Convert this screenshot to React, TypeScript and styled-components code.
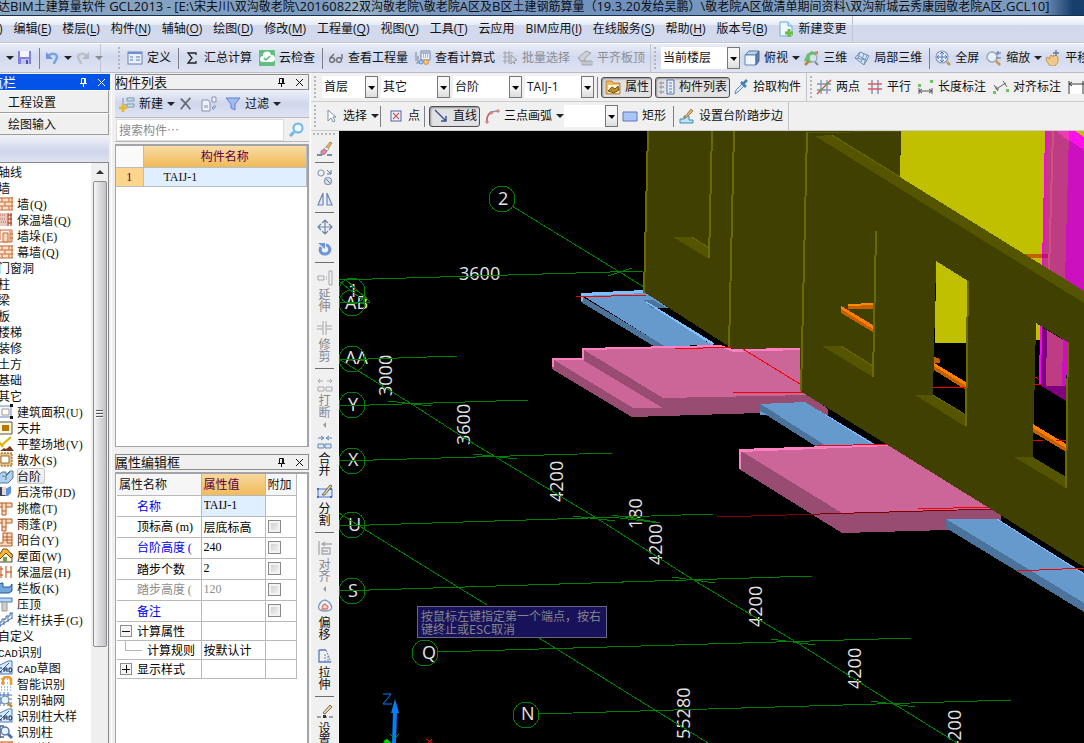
import React from 'react';
import styled, { createGlobalStyle, css } from 'styled-components';

const UI_FONT = '"Open Sans", "Noto Sans CJK SC", sans-serif';
const PANEL_FONT = '"Noto Sans CJK SC", sans-serif';

const Global = createGlobalStyle`
  html, body, #root { height: 100%; }
  body { margin: 0; background: #f0f0f0; font: 12px/16px ${UI_FONT}; color: #111; overflow: hidden; }
  * { box-sizing: border-box; }
  button, input, select { font: inherit; color: inherit; margin: 0; padding: 0; border: 0; background: none; }
`;

/* ---------- frame ---------- */
const Page = styled.div`
  display: flex; flex-direction: column; height: 100vh; overflow: hidden; white-space: nowrap;
`;
const TitleBar = styled.header`
  height: 16px; flex: none; display: flex; align-items: flex-start; overflow: hidden;
  background: linear-gradient(to right, transparent 96%, #173f6c 99%),
    linear-gradient(to right, #8ca9c4, #7b9cc0 30%, #9db6c9 33%, #7c9ac0 38%, #6e90bd 60%, #88a5c2 75%, #7896bd);
  border-bottom: 1px solid #17304c;
`;
const TitleText = styled.h1`
  margin: 0 0 0 -2px; font-size: 12px; line-height: 12px; font-weight: 400; color: #0c0c12;
  span { font-size: 13px; }
`;
const MenuBar = styled.nav`
  height: 27px; flex: none; display: flex; align-items: center; overflow: hidden;
  background: linear-gradient(#fbfcfe, #e6ebf5 34%, #d2d9ed 36%, #d4daee);
  border-bottom: 1px solid #c4c8d4;
`;
const MenuGroup = styled.div`
  display: flex; align-items: center; gap: 11px; height: 100%; padding-right: 6px;
  border-right: 1px solid #bfc4d2; margin-left: -1px;
`;
const MenuItem = styled.button`
  display: flex; align-items: center; gap: 4px; height: 20px; flex: none;
  u { text-underline-offset: 2px; }
`;
const ToolRow = styled.div<{ $tone?: 'blue' | 'gray' }>`
  height: ${p => (p.$tone === 'blue' ? 30 : 29)}px; flex: none; display: flex; align-items: center; overflow: hidden;
  ${p => p.$tone === 'blue'
    ? css`background: linear-gradient(#e9edf7, #d3daee 45%, #dfe4f3); border-top: 1px solid #fff; border-bottom: 1px solid #b9bdc9;`
    : css`background: #f0f0f0; border-bottom: 1px solid #cdcdcd;`}
`;
const ToolGroup = styled.div<{ $lead?: number; $gap?: number; $tail?: number }>`
  display: flex; align-items: center; gap: ${p => p.$gap ?? 7}px; height: 100%; flex: none;
  padding: 0 ${p => p.$tail ?? 5}px 0 ${p => p.$lead ?? 7}px; border-right: 1px solid #c2c4cc;
`;
const Tight = styled.div<{ $gap?: number }>`display: flex; align-items: center; gap: ${p => p.$gap ?? 3}px;`;
const Grip = styled.span<{ $before?: number }>`
  width: 2px; height: 22px; flex: none; margin-left: ${p => p.$before ?? 3}px;
  background: repeating-linear-gradient(#b4b6be 0 2px, transparent 2px 4px);
`;
const Divider = styled.span`
  width: 1px; height: 21px; background: #7d7f86; flex: none;
  ${ToolGroup} > & { margin-right: -2px; }
`;
const Caret = styled.span<{ $off?: boolean }>`
  width: 0; height: 0; flex: none; border: 4px solid transparent; border-bottom: 0;
  border-top-color: ${p => (p.$off ? '#8a8a90' : '#222')};
`;
const Tool = styled.button<{ $pressed?: boolean; $off?: boolean }>`
  display: flex; align-items: center; gap: 4px; height: 21px; flex: none;
  color: ${p => (p.$off ? '#8b8d93' : '#111')};
  > ${Caret} { margin-right: -4px; }
  ${p => p.$pressed && css`
    padding: 0 2px 0 3px; border: 1px solid #4f4f4f; border-radius: 3px;
    background: #e2e2e4; box-shadow: inset 1px 1px 2px #8d8d8d;`}
`;
const ComboBox = styled.span<{ $w: number }>`
  position: relative; display: flex; width: ${p => p.$w}px; height: 22px; background: #fff; flex: none;
  select { flex: 1; min-width: 0; appearance: none; padding: 0 13px 0 2px; outline: none; }
  &::after {
    content: ''; position: absolute; right: 0; top: 0; width: 13px; height: 22px; pointer-events: none;
    border: 1px solid #777; box-sizing: border-box; background: linear-gradient(#f6f6f6 50%, #dcdcdc);
  }
  &::before {
    content: ''; position: absolute; z-index: 1; right: 3px; top: 10px; pointer-events: none;
    border: 4px solid transparent; border-bottom: 0; border-top-color: #000;
    border-left-width: 4px; border-right-width: 3px;
  }
`;
const Body = styled.div`flex: 1; min-height: 0; display: flex;`;
const Svg = styled.svg`display: block; flex: none;`;

/* ---------- navigation dock ---------- */
const Dock = styled.aside`
  width: 112px; flex: none; display: flex; flex-direction: column; font-family: ${PANEL_FONT};
  padding-right: 1px; background: #f0f0f0; border-right: 1px solid #fff;
`;
const DockHead = styled.div`
  height: 16px; margin-top: 1px; flex: none; display: flex; align-items: center; gap: 9px; background: #0453e8; color: #fff;
  padding-right: 4px; font-size: 13px; line-height: 14px; overflow: hidden;
  h2 { flex: 1; margin: 0 0 0 -10px; font: inherit; }
`;
const DockTab = styled.button`
  height: 22px; flex: none; text-align: left; padding-left: 8px; margin-right: 1px;
  border: 1px solid #9c9c9c; border-left: 0; border-top-color: #fff; background: #f0f0f0;
  &:first-of-type { height: 23px; }
`;
const DockBand = styled.div`
  height: 26px; flex: none; margin: 1px 1px 0 0; background: linear-gradient(#eef1f8, #cfd6ea 60%, #dfe3f2);
`;
const TreeBox = styled.div`
  flex: 1; min-height: 0; display: flex; background: #fff; border: 1px solid #888; border-left: 0; border-bottom: 0;
  margin-right: 1px; overflow: hidden;
`;
const Tree = styled.ul`
  flex: 1; min-width: 0; margin: 0; padding: 1px 0 0; list-style: none; overflow: hidden;
`;
const TreeGroup = styled.li`height: 16px; margin-left: -2px; line-height: 16px;`;
const TreeLeaf = styled.li<{ $on?: boolean }>`
  height: 16px; line-height: 16px; display: flex; align-items: center; gap: 3px; margin-left: -2px;
  > span {
    padding: 0 4px 0 0; line-height: 15px; height: 16px;
    ${p => p.$on && css`box-shadow: inset 0 0 0 1px #c8c8c8; border-radius: 3px; background: linear-gradient(#fafafa, #e6e6e6);`}
  }
`;
const Key = styled.span`font: 12px/14px "Liberation Serif", serif; margin-left: 1px;`;
const Narrow = styled.span`font: 11px/14px "Liberation Mono", monospace;`;
const ScrollBar = styled.div`
  width: 17px; flex: none; background: #efefef; display: flex; flex-direction: column; align-items: center;
`;
const ScrollUp = styled.button`
  width: 16px; height: 18px; display: flex; align-items: center; justify-content: center;
  &::after { content: ''; border: 4px solid transparent; border-top: 0; border-bottom-color: #333; }
`;
const Thumb = styled.div`
  width: 14px; height: 466px; max-height: 84%; border: 1px solid #8e8e8e; border-radius: 2px;
  background: linear-gradient(to right, #f6f6f6, #dcdce0 45%, #c2c2c8);
  display: flex; align-items: center; justify-content: center;
  &::after { content: ''; width: 7px; height: 8px; background: repeating-linear-gradient(#555 0 1px, #fafafa 1px 2px, transparent 2px 3px); }
`;

/* ---------- component and property panels ---------- */
const Panels = styled.div`
  width: 199px; flex: none; display: flex; flex-direction: column; padding: 1px 1px 0 3px; font-family: ${PANEL_FONT};
  border-right: 1px solid #fff;
`;
const PanelHead = styled.div`
  height: 16px; flex: none; display: flex; align-items: center; gap: 9px; border: 1px solid #8b8b8b;
  padding-right: 4px; font-size: 13px; line-height: 14px; overflow: hidden;
  h2 { flex: 1; margin: 0 0 0 -1px; font: inherit; }
`;
const HeadButton = styled.button`width: 9px; height: 9px; display: block; flex: none;`;
const PanelTools = styled.div`
  height: 28px; flex: none; display: flex; align-items: center; gap: 8px; padding-left: 4px; font-family: ${UI_FONT};
  background: linear-gradient(#edf0f9, #d0d7ec 50%, #dfe3f3); border-bottom: 1px solid #b8bcc8;
`;
const SearchRow = styled.form`
  height: 24px; flex: none; display: flex; align-items: center; border-bottom: 1px solid #b9b9b9; padding-left: 1px;
  input { flex: 1; min-width: 0; height: 22px; background: #fff; padding: 0 2px; border: 1px solid #dcdcdc; outline: none; }
  input::placeholder { color: #8a8a8a; opacity: 1; }
  button { width: 25px; display: flex; justify-content: center; }
`;
const GridFrame = styled.div<{ $grow?: boolean }>`
  background: #fff; border: 2px solid #a4a4a8; border-left-width: 1px; border-bottom-width: ${p => (p.$grow ? 0 : 1)}px; overflow: hidden;
  ${p => (p.$grow ? css`flex: 1; min-height: 0; margin-top: 2px;` : css`height: 303px; flex: none; margin: 2px 0 7px;`)}
`;
const ListTable = styled.table`
  width: 100%; border-collapse: collapse; table-layout: fixed;
  th, td { padding: 0; border: 1px solid #b9bcc2; font-weight: 400; border-left: 0; border-top: 0; }
  thead th { height: 21px; color: #5b0048; background: linear-gradient(#f9dba5, #efbb57); }
  thead td { background: #fafafa; }
  tbody th { height: 19px; background: #fdd48c; color: #5b0048; }
  tbody td { background: #e0efff; padding-left: 20px; }
`;
const PropTable = styled.table`
  width: 179px; border-collapse: collapse; table-layout: fixed; margin: 0 0 0 1px;
  th, td { padding: 0; border: 1px solid #b9b9b9; border-left: 0; font-weight: 400; text-align: left; overflow: hidden; line-height: 16px; }
  thead th { height: 21px; padding-left: 2px; background: #f6f6f6; border-top: 0; }
  thead th:nth-child(2) { background: linear-gradient(#f8d79c, #efbb5c); color: #5b0048; }
  td { padding-left: 2px; }
`;
const PropRow = styled.tr<{ $h: number; $tone?: string }>`
  height: ${p => p.$h}px;
  th { color: ${p => p.$tone ?? '#000'}; }
  td { color: ${p => (p.$tone === '#8d8d8d' ? '#8d8d8d' : '#000')}; }
`;
const PropName = styled.label<{ $indent: number }>`
  display: flex; align-items: center; gap: 5px; height: 18px; padding-left: ${p => p.$indent}px; overflow: hidden;
`;
const ValueCell = styled.td<{ $active?: boolean }>`
  background: ${p => (p.$active ? '#e0efff' : '#fff')};
  input { width: 100%; height: 18px; display: block; outline: none; }
`;
const Latin = styled.span`font: 12px/16px "Liberation Serif", serif;`;
const LatinInput = styled.input`&& { font: 12px/16px "Liberation Serif", serif; }`;
const Check = styled.input`
  appearance: none; width: 13px; height: 13px; display: block; border: 1px solid #8a8a8a; background: linear-gradient(135deg, #c9c9cd, #f8f8f8);
  box-shadow: inset 0 0 0 2px #f3f3f3;
`;
const Fold = styled.button`
  && { width: 12px; height: 12px; border: 1px solid #8d8d8d; background: #f4f4f4; flex: none; margin-left: 3px; }
`;
const Branch = styled.i`width: 17px; height: 14px; border: solid #b4b4b4; border-width: 0 0 1px 1px; margin: -12px 0 0 8px; flex: none;`;

/* ---------- work area ---------- */
const Work = styled.main`flex: 1; min-width: 0; display: flex; flex-direction: column;`;
const WorkBody = styled.div`flex: 1; min-height: 0; display: flex;`;
const SideTools = styled.div`
  width: 28px; flex: none; display: flex; flex-direction: column; align-items: center; overflow: hidden;
  background: #f0f0f0; border-right: 1px solid #f7f7f7;
`;
const SideGrip = styled.span`
  width: 24px; height: 2px; flex: none; margin: 2px 0 0;
  background: repeating-linear-gradient(to right, #b4b6be 0 2px, transparent 2px 4px);
`;
const SideRule = styled.span`width: 19px; height: 1px; background: #6d6d6d; flex: none; margin-top: 5px;`;
const SideTool = styled.button<{ $off?: boolean; $label?: boolean }>`
  width: 20px; flex: none; display: flex; flex-direction: column; align-items: center; gap: 3px;
  margin-top: ${p => (p.$label ? 7 : 6)}px; color: ${p => (p.$off ? '#85878d' : '#111')};
  span { width: 13px; font-size: 12px; line-height: 12px; white-space: normal; word-break: break-all; text-align: center; }
  i { border: 3px solid transparent; border-left: 0; border-right-color: #999; margin-bottom: -1px; }
`;
const Viewport = styled.section`
  position: relative; flex: 1; min-width: 0; background: #000; overflow: hidden;
`;
const Scene = styled.svg`display: block; width: 100%; height: 100%;`;
const Hint = styled.div`
  position: absolute; left: 78px; top: 475px; width: 190px; height: 32px; padding: 2px 3px;
  background: #17125a; border: 1px solid #68687c; color: #85858a; line-height: 13px; white-space: normal;
  font-family: ${PANEL_FONT};
`;

/* ---------- icons ---------- */
const art: Record<string, React.ReactNode> = {
  save: <><path d="M1 1h13v13H1z" fill="#8280d8" /><path d="M3 1h9v6H3z" fill="#f4f4ff" /><path d="M4 9h8v5H4z" fill="#bfc2f2" /><path d="M9 10h2v4H9z" fill="#4d55a2" /></>,
  undo: <><path d="M4 6c4-4 9-2 9 1 0 3-3 4-3 7" fill="none" stroke="#78a3df" strokeWidth="2.5" /><path d="M2 2v7h7z" fill="#6f98dc" /></>,
  redo: <><path d="M12 6C8 2 3 4 3 7c0 3 3 4 3 7" fill="none" stroke="#bcc1ca" strokeWidth="2.5" /><path d="M14 2v7H7z" fill="#b4b9c4" /></>,
  define: <><rect x="1" y="2" width="14" height="12" fill="#e9f0fc" stroke="#6983b8" /><path d="M1 2h14v2H1z" fill="#6e8fd0" /><path d="M3 7h3M3 10h3M9 7h4M9 10h4" stroke="#5778bb" strokeWidth="1.2" /></>,
  sigma: <path d="M12 5V3H4l4 5-4 5h8v-2" fill="none" stroke="#222" strokeWidth="1.3" />,
  cloud: <><rect width="16" height="16" rx="1" fill="#62bf80" /><path d="M4 12a3 3 0 010-6 4 4 0 018-1 3 3 0 011 7z" fill="#fff" /><path d="M5 8l2 2 4-4" fill="none" stroke="#52ba73" strokeWidth="1.5" /></>,
  glasses: <><circle cx="4" cy="10" r="2.4" fill="none" stroke="#666" strokeWidth="1.2" /><circle cx="11" cy="10" r="2.4" fill="none" stroke="#666" strokeWidth="1.2" /><path d="M2 8l4-4M14 9V4M6 10h2" stroke="#666" strokeWidth="1.2" /></>,
  formula: <><path d="M6 1h9v9H6z" fill="#f5f7ff" stroke="#6f7ea3" /><path d="M7 3h7M8 5h1M10 5h1M12 5h1M8 7h1M10 7h1M12 7h1" stroke="#596fa6" /><path d="M1 2v9M3 6v7M1 13h4" stroke="#8d93a8" strokeWidth="1.2" /><circle cx="11" cy="12" r="2.4" fill="#f7c77b" stroke="#d6883d" /><circle cx="6" cy="12" r="2" fill="#aad0f7" stroke="#6791c4" /></>,
  batch: <><path d="M1 3h10M1 7h7M1 11h7M3 1v13M7 1v13" stroke="#a6a8b0" strokeWidth="1.2" /><path d="M9 5l6 5-3 1 1 3-2-2-2 2z" fill="#d8dae2" stroke="#999ba2" /></>,
  slab: <><path d="M1 8l8-7 5 2-6 5v3H3V9z" fill="#cfd1d6" stroke="#a0a2a8" /><path d="M5 11h10v4H5zM7 11v4M9 11v4M11 11v4M13 11v4" fill="#dfe0e4" stroke="#9a9ca2" strokeWidth=".8" /></>,
  cube: <><path d="M1 5l4-4h10l-3 4z" fill="#b8d2ec" stroke="#5b7ca7" /><path d="M1 5h11v10H1z" fill="#eef5fb" stroke="#6784a8" /><path d="M12 5l3-4v10l-3 4z" fill="#5b7fb1" stroke="#4b6997" /></>,
  tri3d: <><path d="M1 11L4 4l5-3 4 2 1 6-6 4z" fill="#5ec369" /><circle cx="10" cy="8" r="4" fill="#cfe6dc" stroke="#8d9cb4" /><path d="M11 2l4-1v4z" fill="#e67744" /><path d="M6 11l-4 4" stroke="#c0813f" strokeWidth="2.5" /><path d="M12 12l3 3" stroke="#7d89a4" strokeWidth="2" /></>,
  local3d: <><path d="M1 8l5-6 9 4-5 9z" fill="#d6e6f6" stroke="#6e8db5" /><path d="M3 5l9 5M6 2l-2 7M10 4L7 12M13 5l-3 9M1 8l11 2" stroke="#6e8db5" strokeWidth=".9" fill="none" /></>,
  full: <><circle cx="7" cy="7" r="6" fill="#e6f0ff" stroke="#8d99b5" strokeWidth="1.2" /><path d="M7 2v10M2 7h10M5 4l2-2 2 2M5 10l2 2 2-2M4 5L2 7l2 2M10 5l2 2-2 2" stroke="#4b6cb0" strokeWidth=".9" fill="none" /><path d="M12 12l3 3" stroke="#c39b59" strokeWidth="2.5" /></>,
  zoom: <><circle cx="6" cy="7" r="5" fill="#e8f1f8" stroke="#9ca6b4" strokeWidth="1.4" /><path d="M10 11l4 4" stroke="#cb964e" strokeWidth="2.5" /><path d="M12 1v4M10 3h5M10 8h5" stroke="#5672a0" /></>,
  hand: <><path d="M2 7l3 2V6l1-1 2 2V5l2 1 1-1 2 2v5l-3 4H5L1 10z" fill="#edc98d" stroke="#c7994e" /><path d="M11 0v6M8 3h6" stroke="#667495" strokeWidth="1.3" /></>,
  newDoc: <><path d="M2 1h8l4 4v10H2z" fill="#eef7fd" stroke="#6badd3" /><path d="M10 1v4h4" fill="#cfe7f5" stroke="#6badd3" /><path d="M11 8v8M7 12h8" stroke="#6cbc3e" strokeWidth="3" /></>,
  folder: <><path d="M1 4V2h6l1 2h7v11H1z" fill="#f8ba54" stroke="#a77632" strokeWidth=".8" /><path d="M3 6h11v8H3z" fill="#fff2ce" /><path d="M3 12l4-4 3 2 3-3 1 4-5 3z" fill="#c38a28" stroke="#51401d" strokeWidth=".8" /></>,
  list: <><path d="M8 1h7v14H8z" fill="#e8f0ff" stroke="#5870a5" /><path d="M10 4h3M10 7h3M10 10h3M10 13h3" stroke="#5577bd" /><path d="M1 3h2v2H1zM1 7h2v2H1zM1 12h2v2H1z" fill="none" stroke="#8c95a8" /><path d="M4 4h2M4 8h2M4 13h2" stroke="#667" strokeDasharray="1 1" /></>,
  picker: <><path d="M2 15l1-4 6-6 2 2-6 6z" fill="#d4e9fb" stroke="#6e8cab" /><path d="M8 3l5 5M10 5l4-4" stroke="#4a80b4" strokeWidth="2.6" /></>,
  twoPoint: <><path d="M5 1v14M11 1v14M1 5h14M1 11h14" stroke="#8794b0" strokeWidth="1.3" /><path d="M1 15L15 1" stroke="#cf4e53" strokeWidth="1.3" /><circle cx="11" cy="5" r="1.4" fill="#5dad52" /><circle cx="5" cy="11" r="1.4" fill="#5dad52" /></>,
  parallel: <><path d="M5 1v14M11 1v14" stroke="#7484b3" strokeWidth="1.3" /><path d="M1 5h14M1 10h14" stroke="#d45c62" strokeWidth="1.3" /></>,
  length: <><path d="M1 9v6M14 9v6M1 12h13M4 10l-3 2 3 2M11 10l3 2-3 2" stroke="#555" fill="none" /><path d="M0 5h3v3H0zM12 1h3v3h-3z" fill="#67c75b" /></>,
  align: <><path d="M1 6l4 6M10 2l4 6M3 10l10-6M3 7v3h3" stroke="#666" fill="none" /><path d="M0 12h3v3H0zM13 10h3v3h-3z" fill="#67c75b" /></>,
  span: <><path d="M0 4h16v11H0z" fill="#fff" /><path d="M1 2v13M15 2v13M1 5h15M4 3L1 5l3 2" stroke="#333" fill="none" /></>,
  cursor: <path d="M5 2v11l3-3 2 4 2-1-2-4h3z" fill="#fff" stroke="#7f8faa" />,
  point: <><rect x="3" y="3" width="10" height="10" fill="#eef0f8" stroke="#5166a2" /><path d="M5 5l6 6M11 5l-6 6" stroke="#cb555b" strokeWidth="1.1" /></>,
  line: <path d="M2 2l11 11M13 8v5H8" stroke="#33518a" fill="none" strokeWidth="1.4" />,
  arc: <><path d="M3 14C2 8 6 3 14 3" stroke="#7aa0d4" fill="none" strokeWidth="1.4" /><path d="M3 14C2 8 6 3 9 4" stroke="#d36159" fill="none" strokeWidth="1.4" /><path d="M2 13h2v2H2zM6 4h2v2H6zM13 2h2v2h-2z" fill="#f5cbc5" stroke="#ce7468" /></>,
  rect: <path d="M1 4h14v9H1z" fill="#abc6f5" stroke="#5877c0" />,
  stair: <><path d="M1 11h4V8h5v4h4v3H1z" fill="#bce1f5" stroke="#388cb4" /><path d="M5 10l7-9 2 2-7 7z" fill="#e9b06a" stroke="#84612d" strokeWidth=".7" /></>,
  add: <><path d="M8 2h7v3H8zM8 8h7v3H8z" fill="#c5e1f3" stroke="#8195ad" /><path d="M4 2v7h4" fill="none" stroke="#8195ad" /><path d="M4 8v8M0 12h8" stroke="#e5b72a" strokeWidth="2.6" /></>,
  remove: <path d="M2 2c4 3 7 7 11 12M13 1C9 5 5 10 2 14" stroke="#686c74" strokeWidth="2" fill="none" />,
  copy: <><path d="M1 4h6l2 2v9H1z" fill="#eef1f8" stroke="#8794ae" /><path d="M3 9h4v3H3z" fill="#b8c1d4" /><path d="M11 1h4v5h-4z" fill="#eef1f8" stroke="#8794ae" /><path d="M14 9v3h-3M13 10l-2 2 2 2" fill="none" stroke="#7d97d1" /></>,
  filter: <path d="M1 2h14l-5 6v6l-4-2V8z" fill="#a2baf0" stroke="#5f81cf" />,
  search: <><circle cx="9" cy="6" r="4.5" fill="#eff8ff" stroke="#6db5ef" strokeWidth="2" /><path d="M5 10l-4 4" stroke="#6db5ef" strokeWidth="3" /></>,
  brush: <><path d="M9 6l4-5 2 1-4 6z" fill="#f3b450" stroke="#78613e" strokeWidth=".6" /><path d="M7 8l2-2 3 2-2 2z" fill="#f4f4f8" stroke="#8a8a98" strokeWidth=".6" /><path d="M4 10l3-2 3 2-2 3-4 1z" fill="#e28aa4" stroke="#735267" strokeWidth=".6" /><path d="M0 14h5M10 14h5" stroke="#728caa" strokeWidth="1.8" /></>,
  clone: <><circle cx="4" cy="4" r="3" fill="none" stroke="#8c9aae" strokeWidth="1.2" /><circle cx="11" cy="12" r="3.5" fill="#dbe3ea" stroke="#8c9aae" strokeWidth="1.2" /><path d="M10 1l4 4M14 1v4h-4M9 10l4 4" stroke="#5678af" fill="none" /></>,
  mirror: <path d="M6 2v12H1zM10 2v12h5z" fill="#e0e9f8" stroke="#6e88b7" strokeWidth="1.2" />,
  move: <path d="M8 1v14M1 8h14M5 4l3-3 3 3M5 12l3 3 3-3M4 5L1 8l3 3M12 5l3 3-3 3" stroke="#7087a8" strokeWidth="1.2" fill="none" />,
  rotate: <><path d="M4 6c-2 4 0 7 4 7s6-4 4-7c-1-2-2-2-3-2" fill="none" stroke="#6c94da" strokeWidth="3" /><path d="M1 2h7v6z" fill="#6c94da" /></>,
  extend: <path d="M1 6h6v4H1zM9 7h1M9 9h1M12 1h3v14h-3z" fill="none" stroke="#a7a9ae" />,
  trim: <path d="M6 1v14M9 1v14M0 6h6M0 9h6M9 6h6M9 9h6" stroke="#a7a9ae" fill="none" />,
  cut: <path d="M1 5h5M10 5h5M3 3L1 5l2 2M13 3l2 2-2 2M1 11h6v4H1zM9 11h6v4H9z" stroke="#a7a9ae" fill="none" />,
  merge: <path d="M1 4h5M10 4h5M4 2l3 2-3 2M12 2L9 4l3 2M1 10h6v4H1zM8 10h6v4H8z" stroke="#6586b8" fill="#dce6f5" />,
  split: <><path d="M1 5h14v8H1z" fill="#dce9ff" stroke="#4e72c9" /><path d="M0 4h2v2H0zM13 4h2v2h-2zM0 12h2v2H0zM13 12h2v2h-2z" fill="#4568ca" /><path d="M5 11l8-10 2 1-7 9z" fill="#eacb95" stroke="#554c3d" strokeWidth=".8" /></>,
  justify: <path d="M2 1v14M5 8h8v6H5zM5 4h10M8 2L5 4l3 2M5 11h6" stroke="#a7a9ae" fill="none" strokeWidth="1.3" />,
  offset: <><path d="M5 3l3-1 4 2c4 5 4 9-4 9-8 0-8-5-3-10z" fill="#edf3fb" stroke="#7899bb" strokeWidth="1.3" /><path d="M6 7l2-1 3 3-1 2H5z" fill="#ffd7ce" stroke="#dd776c" strokeWidth="1.3" /></>,
  stretch: <><path d="M2 2h7M2 2v12h12" fill="none" stroke="#557cc0" strokeWidth="1.3" /><path d="M9 2l5 12M8 6v7M11 8v6" stroke="#6681ad" strokeDasharray="2 1" /></>,
  setup: <><path d="M0 13h16" stroke="#555" strokeDasharray="4 2" /><path d="M6 9l7-8 2 2-7 7z" fill="#ecd2a6" stroke="#806b55" /><path d="M6 11h3v3H6z" fill="#333" /></>,
  brick: <><path d="M0 1h15v13H0z" fill="#fce0c8" /><path d="M0 2h15M0 6h15M0 10h15M0 14h15M4 2v4M11 2v4M7 6v4M4 10v4M11 10v4M14 1v13" stroke="#c96d3c" /></>,
  warmwall: <><path d="M0 1h9v13H0z" fill="#e8c8bb" /><path d="M2 3h6M0 7h7M3 10h5" stroke="#bb6558" strokeDasharray="1 1" /><path d="M10 1v13M13 1v13M10 3h4M10 7h4M10 11h4" stroke="#b75138" strokeWidth="1.4" /></>,
  pier: <><path d="M0 2h14v12H0z" fill="#fff3e7" stroke="#c56b35" /><path d="M2 2v10M5 5h5v9H5zM12 3v11M12 6h3M12 10h3" stroke="#ca6733" fill="#f4d6bf" /></>,
  area: <><path d="M1 2h12v11H1z" fill="#f5f8ff" stroke="#6c88bd" /><path d="M4 5h7v6H4z" fill="#fff" stroke="#999" /><path d="M12 0h3v3h-3zM12 12h3v3h-3z" fill="#151515" /></>,
  yard: <><path d="M1 2h13v12H1z" fill="#fff7dd" stroke="#57524a" /><path d="M4 5h7v6H4z" fill="#b97800" /></>,
  ground: <><path d="M1 6l4 5M4 9l9-8" fill="none" stroke="#dfb400" strokeWidth="2.2" /><path d="M2 15l4-3 2 1 4-3 4 5z" fill="#713b20" /></>,
  apron: <><path d="M0 1h14v13H0z" fill="#e6c07e" stroke="#895821" strokeDasharray="2 1" /><path d="M3 4h8v7H3z" fill="#fff" stroke="#996e39" /></>,
  steps: <path d="M0 8l4-4h4v3l4-4h3v7l-5 5H0zM4 8h4l4-4M8 8v4" fill="#afd0ee" stroke="#557692" />,
  pour: <><path d="M0 3h7v9H0z" fill="#314562" /><path d="M7 5l6-3v7l-3 3H7z" fill="#5c93de" /><path d="M4 3h4v8H4z" fill="#ead6cb" /></>,
  eave: <path d="M0 3h14v4H8v8H4V7H0zM4 3v4M8 3v4M4 11h4" fill="#fbdcbf" stroke="#b85925" />,
  balcony: <path d="M5 1h9v13H0v-3h5zM9 1v10M5 5h9M5 8h9M9 11h5" fill="#fbdcbf" stroke="#b85925" />,
  roof: <><path d="M1 7l5-5 8 4v8H1z" fill="#fff1db" stroke="#4d4639" /><path d="M5 1h4l6 7-2 2-5-5-6 6-2-2z" fill="#ffb627" stroke="#625139" /><path d="M5 9h4v5H5z" fill="#739e51" /></>,
  insulation: <path d="M3 2v12M8 2v12M13 2v12M0 5h5M8 8h6M0 11h5" stroke="#d2703f" fill="none" strokeWidth="1.3" />,
  panel: <path d="M0 6l3-3h2v4h7l2-3v7l-3 2H0z" fill="#73a7db" stroke="#275b91" />,
  coping: <><path d="M0 2h14v4H0z" fill="#b7d9ff" stroke="#3f7bc2" /><path d="M4 6h5v9H4z" fill="#cfcfcf" stroke="#999" /></>,
  rail: <path d="M0 10h4V7h4V4h4V1h3M2 10v5M6 7v6M10 4v6M14 1v6M0 15l14-9" stroke="#3668af" fill="none" />,
  cad: <><path d="M0 6l10-5h4v13H0z" fill="#daeaff" stroke="#437bbb" /><path d="M2 12l9-9" stroke="#2c62ab" /><path d="M1 12V8h3M1 12h3M6 12V8h3v4M6 10h3M11 8h2l1 2-1 2h-2z" stroke="#192d52" fill="none" /></>,
  smart: <><path d="M0 3h14M0 7h14M0 11h14M0 14h14" stroke="#3c86d5" strokeDasharray="1 2" /><path d="M5 9V4c0-4 8-4 8 0v5" stroke="#ee9929" fill="none" strokeWidth="2.5" /></>,
  grid: <><path d="M2 0v14M6 0v14M10 0v14M0 3h14M0 7h14M0 11h14" stroke="#4075b8" /><circle cx="7" cy="8" r="4" fill="#e5f5ff" stroke="#73879f" /><path d="M10 11l4 4" stroke="#c08a43" strokeWidth="2.5" /></>,
  find: <><path d="M0 2h6M2 2v12M0 13h6" stroke="#4d6380" strokeWidth="1.5" /><circle cx="7" cy="7" r="4" fill="#e5f5ff" stroke="#5a79aa" strokeWidth="1.5" /><path d="M10 10l4 4" stroke="#4b6fa8" strokeWidth="3" /></>,
};
const Icon = ({ n, s = 16 }: { n: string; s?: number }) => <Svg width={s} height={s} viewBox="0 0 16 16" aria-hidden="true">{art[n]}</Svg>;
const Pin = () => <Svg width="9" height="9" viewBox="0 0 9 9"><path d="M1 5.5h7M2.5 5V.5h4V5M4.5 5v4M5.5 1v4" stroke="currentColor" fill="none" /></Svg>;
const Close = () => <Svg width="9" height="9" viewBox="0 0 9 9"><path d="M1 1l7 7M8 1L1 8" stroke="currentColor" fill="none" /></Svg>;

const Combo = ({ label, value, w }: { label: string; value: string; w: number }) => (
  <ComboBox $w={w}><select aria-label={label} defaultValue={value}><option value={value}>{value}</option></select></ComboBox>
);

const PanelTitle = ({ children }: { children: string }) => (
  <><h2>{children}</h2><HeadButton aria-label="固定"><Pin /></HeadButton><HeadButton aria-label="关闭"><Close /></HeadButton></>
);

const windowTitle = '达BIM土建算量软件 GCL2013 - [E:\\宋夫川\\双沟敬老院\\20160822双沟敬老院\\敬老院A区及B区土建钢筋算量（19.3.20发给吴鹏）\\敬老院A区做清单期间资料\\双沟新城云秀康园敬老院A区.GCL10]';

const menus: [string, string][] = [
  ['编辑', 'E'], ['楼层', 'L'], ['构件', 'N'], ['辅轴', 'O'], ['绘图', 'D'], ['修改', 'M'], ['工程量', 'Q'], ['视图', 'V'],
  ['工具', 'T'], ['云应用', ''], ['BIM应用', 'I'], ['在线服务', 'S'], ['帮助', 'H'], ['版本号', 'B'],
];

type Node = [string, string?, string?];
const tree: Node[] = [
  ['轴线'], ['墙'], ['墙', '(Q)', 'brick'], ['保温墙', '(Q)', 'warmwall'], ['墙垛', '(E)', 'pier'], ['幕墙', '(Q)', 'brick'],
  ['门窗洞'], ['柱'], ['梁'], ['板'], ['楼梯'], ['装修'], ['土方'], ['基础'], ['其它'],
  ['建筑面积', '(U)', 'area'], ['天井', '', 'yard'], ['平整场地', '(V)', 'ground'], ['散水', '(S)', 'apron'], ['台阶', '', 'steps'],
  ['后浇带', '(JD)', 'pour'], ['挑檐', '(T)', 'eave'], ['雨蓬', '(P)', 'eave'], ['阳台', '(Y)', 'balcony'], ['屋面', '(W)', 'roof'],
  ['保温层', '(H)', 'insulation'], ['栏板', '(K)', 'panel'], ['压顶', '', 'coping'], ['栏杆扶手', '(G)', 'rail'],
  ['自定义'], ['CAD识别'], ['CAD草图', '', 'cad'], ['智能识别', '', 'smart'], ['识别轴网', '', 'grid'], ['识别柱大样', '', 'cad'], ['识别柱', '', 'find'], ['识别墙', '', 'brick'],
];
const TreeText = ({ t }: { t: string }) => (t.startsWith('CAD') ? <><Narrow>CAD</Narrow>{t.slice(3)}</> : <>{t}</>);

const sideTools: ({ rule: true } | { icon: string; name: string; label?: boolean; off?: boolean; more?: boolean })[] = [
  { icon: 'brush', name: '格式刷' }, { rule: true }, { icon: 'clone', name: '复制' }, { icon: 'mirror', name: '镜像' }, { rule: true },
  { icon: 'move', name: '移动' }, { icon: 'rotate', name: '旋转' }, { rule: true },
  { icon: 'extend', name: '延伸', label: true, off: true }, { icon: 'trim', name: '修剪', label: true, off: true }, { rule: true },
  { icon: 'cut', name: '打断', label: true, off: true, more: true }, { icon: 'merge', name: '合并', label: true }, { icon: 'split', name: '分割', label: true }, { rule: true },
  { icon: 'justify', name: '对齐', label: true, off: true, more: true }, { icon: 'offset', name: '偏移', label: true }, { icon: 'stretch', name: '拉伸', label: true }, { rule: true },
  { icon: 'setup', name: '设置', label: true },
];

const Axes = () => {
  const bubbles: [number, number, string, number, number][] = [
    [502, 199, '2', 498, 205], [352, 291, '1', 348, 297], [352, 303, 'AB', 345, 309], [352, 359, 'AA', 345, 364], [352, 405, 'Y', 348, 411],
    [352, 461, 'X', 348, 466], [352, 525, 'U', 348, 531], [352, 591, 'S', 348, 597], [425, 653, 'Q', 422, 659], [526, 715, 'N', 521, 720],
  ];
  const dims: [number, number, string][] = [
    [392, 396, '3000'], [470, 445, '3600'], [563, 502, '4200'], [642, 529, '180'], [662, 565, '4200'], [762, 627, '4200'], [861, 689, '4200'], [690, 739, '55280'], [961, 751, '4200'],
  ];
  return (
    <g fontFamily="Open Sans, sans-serif" fontSize="18" fill="#e4e4e4">
      {bubbles.map(([, , t, x, y]) => <text key={t} x={x} y={y}>{t}</text>)}
      {dims.map(([x, y, t]) => <text key={`${x}`} transform={`translate(${x} ${y}) rotate(-90)`}>{t}</text>)}
      <text x="459" y="280">3600</text>
      <g fill="none" stroke="#008000" shapeRendering="crispEdges">
        {bubbles.map(([x, y, t]) => <circle key={t} cx={x} cy={y} r="13" />)}
        <path d="M512 206L644 287M339 280L644 271M608 276L632 268M339 303L370 302M339 281L364 301M345 279L370 302M339 360L457 356M339 406L528 400M339 461L613 453M339 526L713 514M339 591L812 576M438 652L912 638M539 714L1012 700" />
        <path d="M339 359L410 403L466 439L598 519L692 579L796 642L894 704L957 743M339 513L364 529L487 605M539 638L708 743" />
        <path d="M388 401L431 406M473 454L517 459M573 516L615 521M612 515L656 522M620 518L660 523M672 577L715 583M771 639L815 645M871 701L915 707" />
      </g>
    </g>
  );
};

const Model = () => (
  <Scene viewBox="339 131 745 612" preserveAspectRatio="xMinYMin slice" role="img" aria-label="三维视图">
    <Axes />
    <g shapeRendering="crispEdges">
      {/* far slab and column */}
      <path d="M901 131H1084V300L900 180z" fill="#c0c000" />
      <path d="M1024 254H1046V258H1031z" fill="#c46000" />
      <path d="M1045 131H1084V292L1042 266z" fill="#cc10c0" />
      <path d="M1047 131H1069L1065 281L1044 267z" fill="#be3c84" />
      <path d="M1052 131h2l-4 140h-2z" fill="#cf5080" />
      <path d="M1056 131H1069V141z" fill="#ee3ab8" /><path d="M1069 131H1075L1084 137V150L1069 140z" fill="#ff10e8" /><path d="M1075 131H1084V137z" fill="#c0c000" />
      <path d="M1045 131h2l-3 136h-2z" fill="#ff00e8" />
      <path d="M1042 254h6v4h-6z" fill="#c01080" />

      {/* first blue strip */}
      <path d="M582 295L647 293L667 307L715 345L664 346z" fill="#6699cc" />
      <path d="M653 307L662 308H668L724 343V347H715z" fill="#000" />
      <path d="M643 300H653L667 308H652z" fill="#4c739b" />
      <path d="M581 295L583 297L666 347H655L581 302z" fill="#4c739b" />
      <path d="M581 293L644 290V293L583 296V301H581z" fill="#80c0ff" />
      <path d="M645 302L646 301L714 343L712 345z" fill="#80c0ff" />

      {/* second blue strip */}
      <path d="M760 404L805 402L880 447H827z" fill="#6699cc" /><path d="M760 404L828 447H817L760 411z" fill="#4c739b" />
      <path d="M805 402L876 446" stroke="#80c0ff" fill="none" />

      {/* two-step landing */}
      <path d="M582 348L720 345L733 349L800 348V391L806 393L828 409L760 413L632 417L552 369V358H582z" fill="#984c72" />
      <path d="M760 404L805 402L826 415L760 415z" fill="#6699cc" /><path d="M760 404L780 416H770L760 411z" fill="#4c739b" />
      <path d="M805 402L828 416V409L806 393z" fill="#984c72" />
      <path d="M584 350L720 347L733 350H801V392L810 395L663 398z" fill="#cc6699" />
      <path d="M554 360H583L663 408L633 408z" fill="#cc6699" />
      <path d="M552 358H582V348L720 345L733 349L800 348V350L733 352L720 347L584 350V360H554V367H552z" fill="#ff80c0" />

      {/* lower landing */}
      <path d="M739 449L889 444L1001 515V521L947 530L842 533L739 469z" fill="#984c72" />
      <path d="M741 451L889 445L992 509L842 513z" fill="#cc6699" />
      <path d="M739 449L889 444V446L741 452V469H739z" fill="#ff80c0" />

      {/* third blue strip */}
      <path d="M946 519H997L1084 573V604z" fill="#6699cc" /><path d="M946 519L1084 603V612L946 528z" fill="#4c739b" />
      <path d="M997 519L1084 574" stroke="#80c0ff" fill="none" />

      {/* long wall */}
      <path d="M647 131H901L900 178L1084 292V567L878 439L800 391V348L733 349L644 292z" fill="#404000" />
      <path d="M815 136L832 135L1084 291V303z" fill="#555500" />
      <path d="M806 133L900 131" stroke="#555500" fill="none" />
      <path d="M673 237H692L709 248V259zM822 346H841L873 366V377z" fill="#555500" />
      <path d="M648 131L644 293M712 131L709 258M734 131L729 347M807 132L801 391M876 231L873 377" stroke="#6a6a00" strokeWidth="2" fill="none" />
      <path d="M692 237L709 248M841 346L873 366M832 135L900 177" stroke="#6a6a00" fill="none" />

      {/* openings */}
      <path d="M848 304L873 303V309H848z" fill="#c46000" /><path d="M848 304L873 303V305L848 306z" fill="#ff8c00" />
      <path d="M841 306L873 326V332L841 313z" fill="#c46000" /><path d="M841 306L873 325V329L841 309z" fill="#ff8000" />
      <path d="M936 261L968 281L966 343V416L933 395z" fill="#000" /><path d="M936 261L968 281L966 343H935z" fill="#c0c000" />
      <path d="M934 357L940 359V363H934z" fill="#c46000" />
      <path d="M934 363L966 383V390L934 370z" fill="#c46000" /><path d="M934 363L966 382V386L934 366z" fill="#ff8000" />
      <path d="M915 395H933L966 415V427z" fill="#555500" />
      <path d="M968 281L966 426" stroke="#6a6a00" strokeWidth="2" fill="none" />
      <path d="M933 395L966 415" stroke="#6a6a00" fill="none" />
      <path d="M1036 323L1068 342L1066 478L1033 457z" fill="#000" /><path d="M1036 323L1041 326V340H1036z" fill="#c0c000" />
      <path d="M1040 326L1067 342L1066 401L1040 385z" fill="#800080" />
      <path d="M1047 330L1063 340V386H1046z" fill="#be3c84" /><path d="M1063 339L1068 342L1066 386H1062z" fill="#cc10c0" />
      <path d="M1040 326h2l-1 59h-2z" fill="#ff00ff" />
      <path d="M1033 424L1066 445V452L1033 432z" fill="#c46000" /><path d="M1033 424L1066 444V448L1033 428z" fill="#ff8000" />
      <path d="M1014 457H1033L1066 477V488z" fill="#555500" /><path d="M1068 342L1066 488" stroke="#6a6a00" strokeWidth="2" />

      {/* guide lines */}
      <path d="M576 297L647 295M675 349L732 347M743 349L800 384M733 393L803 392M817 446L889 444M918 509L989 507M1017 571L1084 568M933 387H966M1033 384H1041M1035 377L1040 380M1033 440H1043M1056 440H1066" stroke="#f00000" fill="none" />
      <path d="M717 517L992 509" stroke="#800000" fill="none" />
    </g>
    {/* axis gizmo */}
    <path d="M394 743L395 712" stroke="#0080ff" strokeWidth="4" /><path d="M395 699L399 713H391z" fill="#0080ff" />
    <path d="M383 694H391L383 704H392" fill="none" stroke="#0080ff" />
    <path d="M384 741l3-2 4 4h-7zM390 734l4 4M399 734l-4 4" fill="#00e000" stroke="#00a000" /><path d="M426 739l8 5M432 739l-4 4" stroke="#f00000" />
  </Scene>
);

type Prop = { name: string; value?: string; tone?: string; check?: boolean; h?: number; kind?: 'open' | 'closed' | 'branch'; active?: boolean; unit?: string; latin?: boolean };
const props: Prop[] = [
  { name: '名称', value: 'TAIJ-1', tone: '#0000f0', active: true, latin: true },
  { name: '顶标高', unit: '(m)', value: '层底标高', check: true },
  { name: '台阶高度', unit: '(', value: '240', tone: '#0000f0', check: true, latin: true },
  { name: '踏步个数', value: '2', check: true, latin: true },
  { name: '踏步高度', unit: '(', value: '120', tone: '#8d8d8d', check: true, latin: true },
  { name: '备注', value: '', tone: '#0000f0', check: true },
  { name: '计算属性', kind: 'open', h: 19 }, { name: '计算规则', value: '按默认计', kind: 'branch', h: 19 }, { name: '显示样式', kind: 'closed', h: 19 },
];

export default function App() {
  return (
    <Page>
      <Global />
      <TitleBar>
        <TitleText>{windowTitle.split(/([\x20-\x7e]+)/).map((s, i) => (i % 2 ? <span key={i}>{s}</span> : s))}</TitleText>
      </TitleBar>
      <MenuBar>
        <MenuGroup>
          <MenuItem>)</MenuItem>
          {menus.map(([t, k]) => <MenuItem key={t}><span>{t}{k && <>(<u>{k}</u>)</>}</span></MenuItem>)}
          <MenuItem><Icon n="newDoc" />新建变更</MenuItem>
        </MenuGroup>
      </MenuBar>
      <ToolRow $tone="blue">
        <ToolGroup $lead={6} $gap={6} $tail={1}>
          <Tight><Caret /><Tool aria-label="保存"><Icon n="save" /></Tool></Tight><Divider />
          <Tight $gap={7}><Tool aria-label="撤销"><Icon n="undo" /><Caret /></Tool><Tool aria-label="重做"><Icon n="redo" /><Caret $off /></Tool></Tight>
        </ToolGroup>
        <Grip $before={17} />
        <ToolGroup>
          <Tool><Icon n="define" />定义</Tool><Divider />
          <Tool><Icon n="sigma" />汇总计算</Tool><Tool><Icon n="cloud" />云检查</Tool><Divider />
          <Tool><Icon n="glasses" />查看工程量</Tool><Tool><Icon n="formula" />查看计算式</Tool>
          <Tool $off><Icon n="batch" />批量选择</Tool><Tool $off><Icon n="slab" />平齐板顶</Tool>
        </ToolGroup>
        <Grip />
        <ToolGroup $lead={5}>
          <Tight $gap={4}><Combo label="楼层范围" value="当前楼层" w={79} />
            <Tool><Icon n="cube" />俯视<Caret /></Tool></Tight>
          <Tool><Icon n="tri3d" />三维</Tool><Tool><Icon n="local3d" />局部三维</Tool><Divider />
          <Tool><Icon n="full" />全屏</Tool><Tool><Icon n="zoom" />缩放<Caret /></Tool><Tool><Icon n="hand" />平移</Tool>
        </ToolGroup>
      </ToolRow>
      <Body>
        <Dock>
          <DockHead><PanelTitle>航栏</PanelTitle></DockHead>
          <DockTab>工程设置</DockTab><DockTab>绘图输入</DockTab>
          <DockBand />
          <TreeBox>
            <Tree>
              {tree.map(([t, k, icon], i) => icon
                ? <TreeLeaf key={i} $on={t === '台阶'}><Icon n={icon} /><span><TreeText t={t} />{k && <Key>{k}</Key>}</span></TreeLeaf>
                : <TreeGroup key={i}><TreeText t={t} /></TreeGroup>)}
            </Tree>
            <ScrollBar><ScrollUp aria-label="向上" /><Thumb /></ScrollBar>
          </TreeBox>
        </Dock>
        <Panels>
          <PanelHead><PanelTitle>构件列表</PanelTitle></PanelHead>
          <PanelTools>
            <Tool><Icon n="add" />新建<Caret /></Tool><Tool aria-label="删除"><Icon n="remove" s={14} /></Tool>
            <Tool aria-label="复制"><Icon n="copy" /></Tool><Tool><Icon n="filter" />过滤<Caret /></Tool>
          </PanelTools>
          <SearchRow><input aria-label="搜索构件" placeholder="搜索构件…" /><button type="button" aria-label="搜索"><Icon n="search" /></button></SearchRow>
          <GridFrame>
            <ListTable>
              <colgroup><col width="27" /><col /></colgroup>
              <thead><tr><td /><th>构件名称</th></tr></thead>
              <tbody><tr><th><Latin>1</Latin></th><td><Latin>TAIJ-1</Latin></td></tr></tbody>
            </ListTable>
          </GridFrame>
          <PanelHead><PanelTitle>属性编辑框</PanelTitle></PanelHead>
          <GridFrame $grow>
            <PropTable>
              <colgroup><col width="84" /><col width="64" /><col width="31" /></colgroup>
              <thead><tr><th>属性名称</th><th>属性值</th><th>附加</th></tr></thead>
              <tbody>
                {props.map((p, i) => (
                  <PropRow key={p.name} $h={p.h ?? 21} $tone={p.tone}>
                    <th>
                      <PropName as={p.kind && p.kind !== 'branch' ? 'div' : 'label'} htmlFor={p.value !== undefined ? `v${i}` : undefined} $indent={p.kind ? 0 : 20}>
                        {p.kind === 'branch' && <Branch />}
                        {(p.kind === 'open' || p.kind === 'closed') && <Fold aria-label={p.name}>
                          <Svg width="10" height="10" viewBox="0 0 10 10"><path d={p.kind === 'open' ? 'M1 5.5h8' : 'M1 5.5h8M5.5 1v8'} stroke="#111" /></Svg></Fold>}
                        <span>{p.name}{p.unit && <> <Latin>{p.unit}</Latin></>}</span>
                      </PropName>
                    </th>
                    <ValueCell $active={p.active}>{p.value !== undefined && (p.latin
                      ? <LatinInput id={`v${i}`} defaultValue={p.value} /> : <input id={`v${i}`} defaultValue={p.value} />)}</ValueCell>
                    <td>{p.check && <Check type="checkbox" aria-label={`${p.name} 附加`} />}</td>
                  </PropRow>
                ))}
              </tbody>
            </PropTable>
          </GridFrame>
        </Panels>
        <Work>
          <ToolRow>
            <Grip />
            <ToolGroup $lead={6}>
              <Tight>
                <Combo label="楼层" value="首层" w={56} /><Combo label="类别" value="其它" w={69} />
                <Combo label="构件类型" value="台阶" w={69} /><Combo label="构件" value="TAIJ-1" w={69} />
                <Divider /><Tool $pressed><Icon n="folder" />属性</Tool><Tool $pressed><Icon n="list" />构件列表</Tool>
                <Tool><Icon n="picker" />拾取构件</Tool>
              </Tight>
            </ToolGroup>
            <Grip />
            <ToolGroup $lead={4}>
              <Tool><Icon n="twoPoint" />两点</Tool><Tool><Icon n="parallel" />平行</Tool><Tool><Icon n="length" />长度标注</Tool>
              <Tool><Icon n="align" />对齐标注</Tool><Tool aria-label="标注"><Icon n="span" /></Tool>
            </ToolGroup>
          </ToolRow>
          <ToolRow>
            <Grip />
            <ToolGroup>
              <Tight $gap={5}><Tool><Icon n="cursor" />选择<Caret /></Tool><Divider /></Tight>
              <Tight $gap={4}>
                <Tool><Icon n="point" />点</Tool><Divider /><Tool $pressed><Icon n="line" />直线</Tool>
                <Tool><Icon n="arc" />三点画弧<Caret /></Tool><Combo label="绘制方式" value="" w={54} /><Tool><Icon n="rect" />矩形</Tool>
              </Tight>
              <Divider /><Tool><Icon n="stair" />设置台阶踏步边</Tool>
            </ToolGroup>
          </ToolRow>
          <WorkBody>
            <SideTools>
              <SideGrip />
              {sideTools.map((t, i) => 'rule' in t ? <SideRule key={i} /> : (
                <SideTool key={i} $off={t.off} $label={t.label} aria-label={t.name}>
                  <Icon n={t.icon} />{t.label && <span>{t.name}</span>}{t.more && <i />}
                </SideTool>
              ))}
            </SideTools>
            <Viewport><Model /><Hint>按鼠标左键指定第一个端点，按右键终止或ESC取消</Hint></Viewport>
          </WorkBody>
        </Work>
      </Body>
    </Page>
  );
}
